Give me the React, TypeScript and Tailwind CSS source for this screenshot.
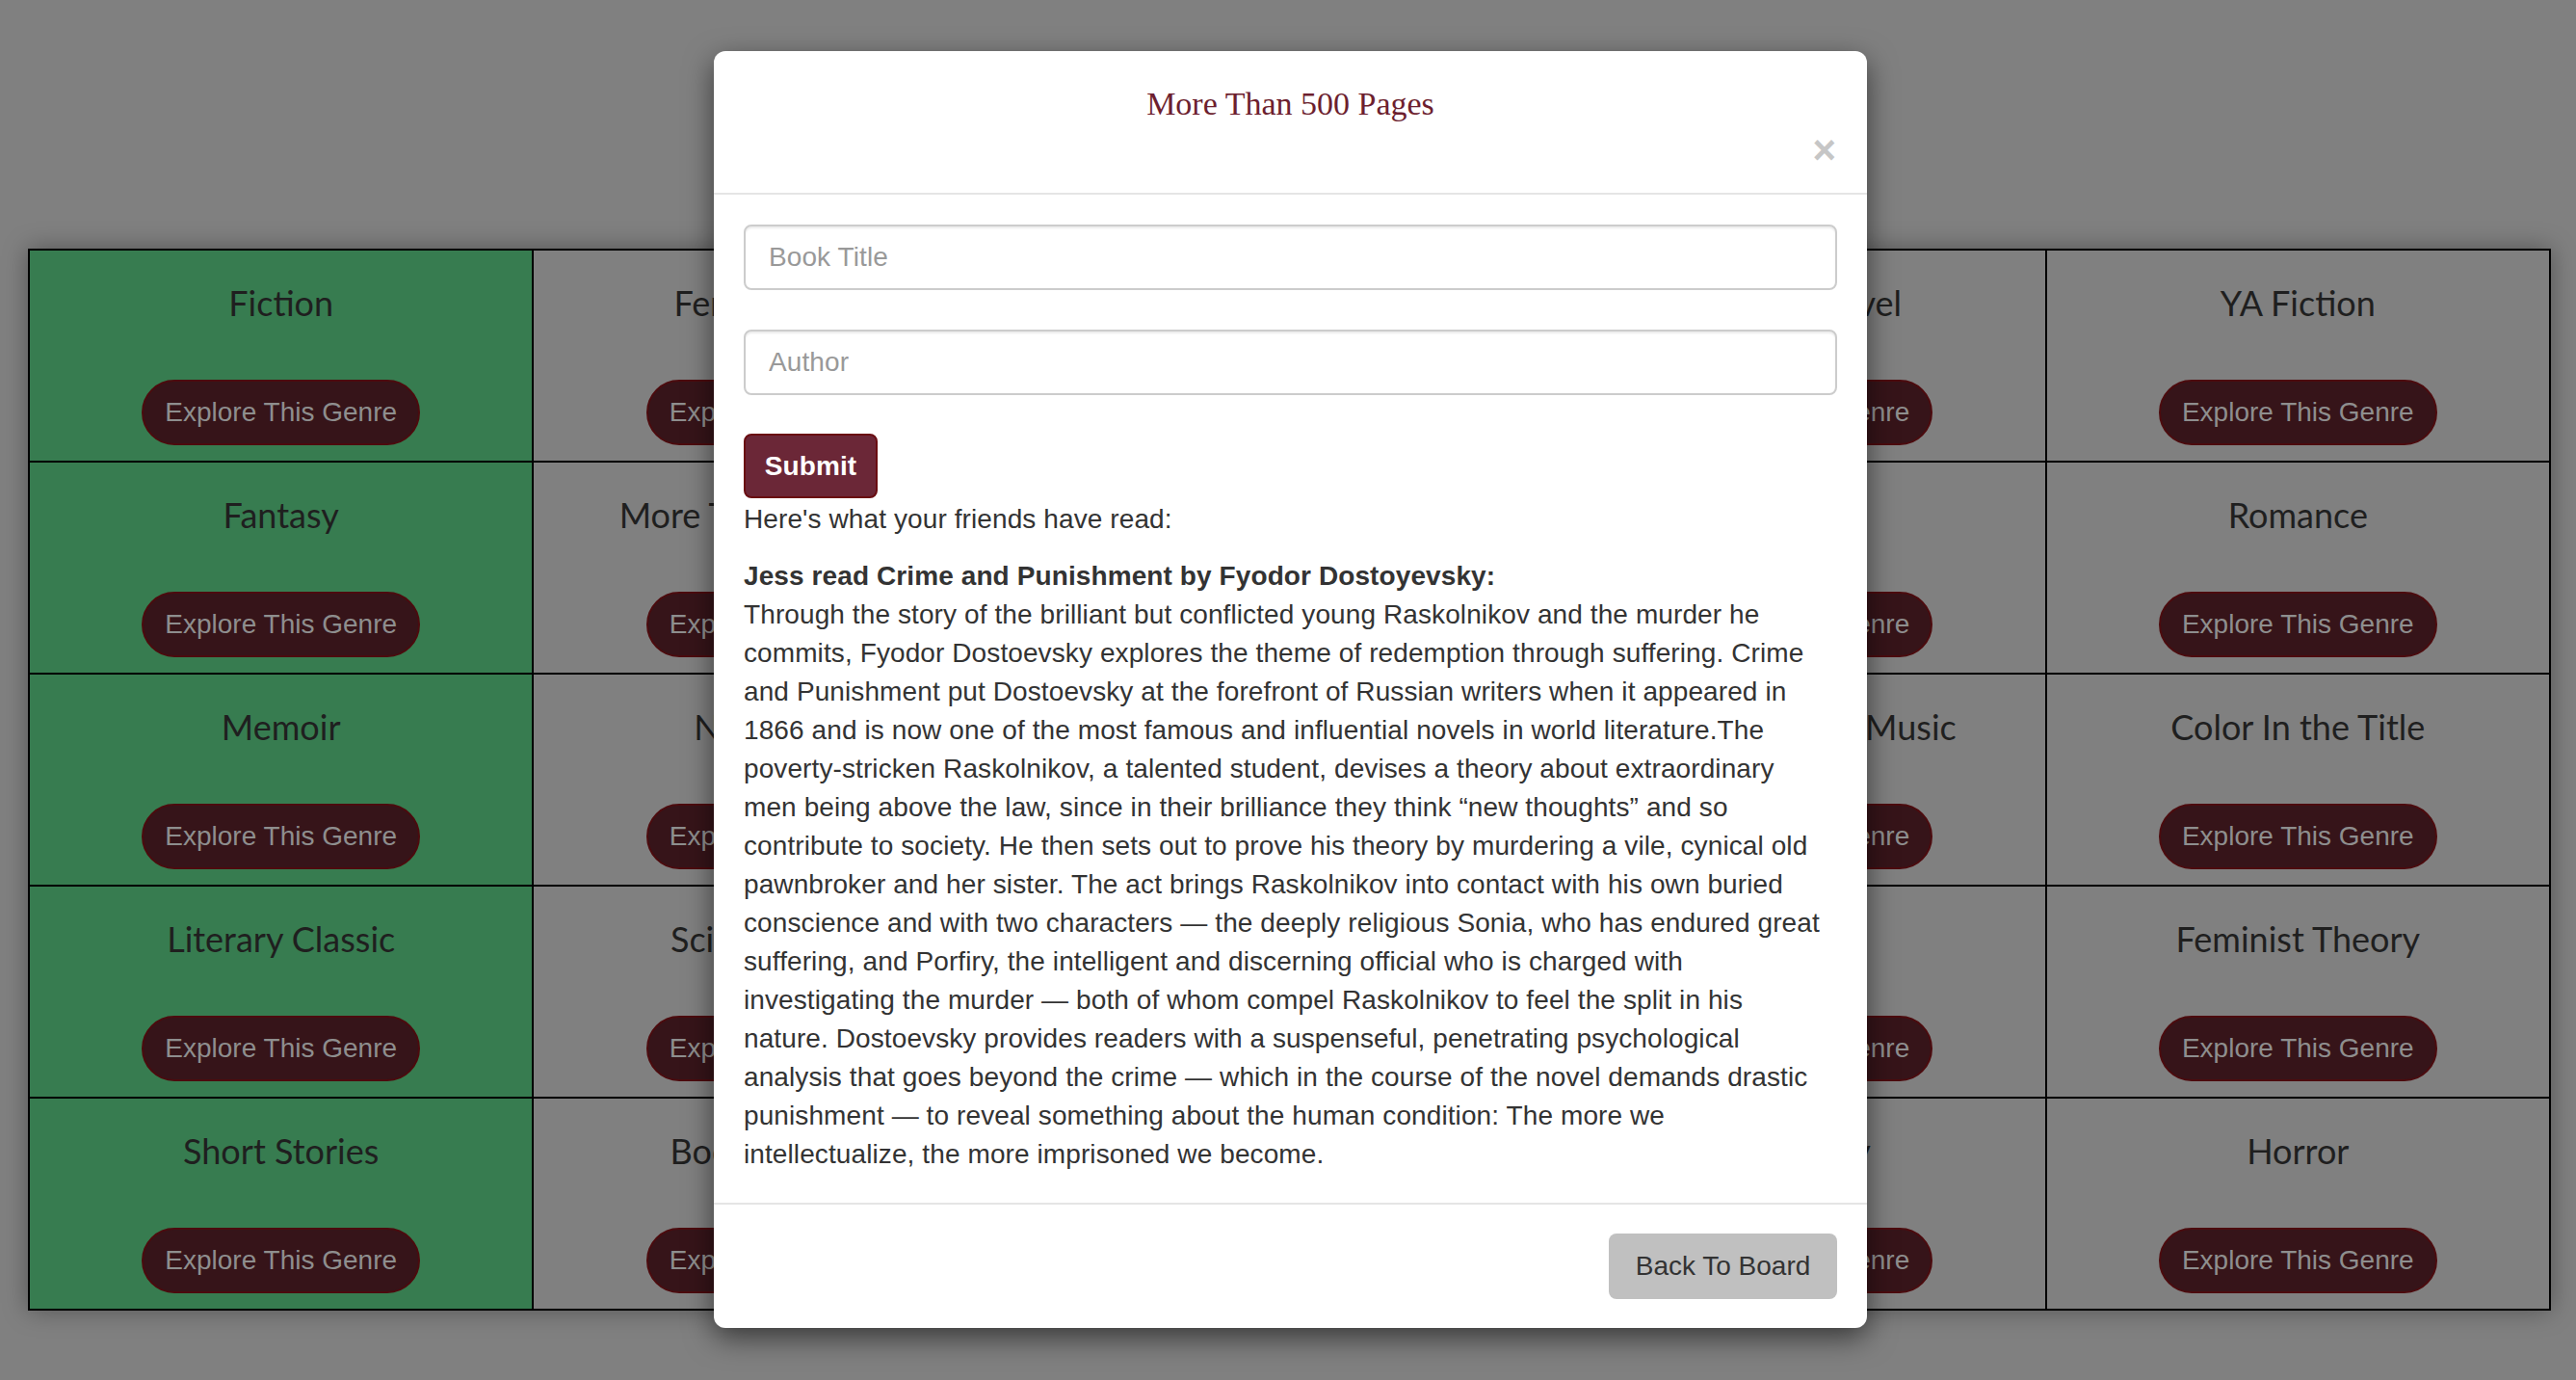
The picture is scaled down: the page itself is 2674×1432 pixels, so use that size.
import React from "react";

/* ── 棋盘数据 ─────────────────────────────────── */
const genres: string[][] = [
  ["Fiction", "Female Author", "Poetry", "Graphic Novel", "YA Fiction"],
  ["Fantasy", "More Than 500 Pages", "Mystery", "Travel", "Romance"],
  ["Memoir", "Non-Fiction", "Self Help", "Book Involving Music", "Color In the Title"],
  ["Literary Classic", "Science Fiction", "History", "Plays", "Feminist Theory"],
  ["Short Stories", "Book Club Pick", "Humor", "Biography", "Horror"],
];

const sans = "font-['Liberation_Sans',Arial,sans-serif]";

// 按截图中的换行拆开
const summaryLines = [
  "Through the story of the brilliant but conflicted young Raskolnikov and the murder he",
  "commits, Fyodor Dostoevsky explores the theme of redemption through suffering. Crime",
  "and Punishment put Dostoevsky at the forefront of Russian writers when it appeared in",
  "1866 and is now one of the most famous and influential novels in world literature.The",
  "poverty-stricken Raskolnikov, a talented student, devises a theory about extraordinary",
  "men being above the law, since in their brilliance they think \u201cnew thoughts\u201d and so",
  "contribute to society. He then sets out to prove his theory by murdering a vile, cynical old",
  "pawnbroker and her sister. The act brings Raskolnikov into contact with his own buried",
  "conscience and with two characters \u2014 the deeply religious Sonia, who has endured great",
  "suffering, and Porfiry, the intelligent and discerning official who is charged with",
  "investigating the murder \u2014 both of whom compel Raskolnikov to feel the split in his",
  "nature. Dostoevsky provides readers with a suspenseful, penetrating psychological",
  "analysis that goes beyond the crime \u2014 which in the course of the novel demands drastic",
  "punishment \u2014 to reveal something about the human condition: The more we",
  "intellectualize, the more imprisoned we become.",
];

/* ── 单元格 ───────────────────────────────────── */
function GenreCell({ name, done }: { name: string; done: boolean }) {
  return (
    <div
      className={`flex h-[218px] flex-col items-center pt-[34px] ${
        done ? "bg-[#377c50]" : "bg-[#808080]"
      }`}
    >
      <h3 className="whitespace-nowrap font-['Lato',sans-serif] text-[36px] leading-[40px] text-[#1f1f1f]">
        {name}
      </h3>
      <button
        type="button"
        className={`mt-[60px] h-[68px] w-[289px] rounded-full border-2 border-[#4c0b0e] bg-[#361419] text-[28px] text-[#8e8e8e] ${sans}`}
      >
        Explore This Genre
      </button>
    </div>
  );
}

/* ── 弹窗 ─────────────────────────────────────── */
function GenreModal() {
  return (
    <div
      className={`absolute left-[741px] top-[53px] w-[1197px] rounded-[12px] bg-white shadow-[0_10px_30px_rgba(0,0,0,0.55)] ${sans}`}
    >
      {/* header */}
      <div className="border-b-2 border-[#e5e5e5] px-[30px] pb-[27px] pt-[30px]">
        <h4 className="text-center font-['Liberation_Serif',serif] text-[34px] leading-[50px] text-[#6d1f2f]">
          More Than 500 Pages
        </h4>
        <div className="flex justify-end">
          <button
            type="button"
            className="h-[40px] pr-[2px] text-[42px] font-bold leading-[46px] text-[#c6c6c6]"
          >
            ×
          </button>
        </div>
      </div>

      {/* body */}
      <div className="px-[31px] pb-[30px] pt-[31px] text-[28px] leading-[40px] tracking-[0.1px] text-[#333333]">
        <input
          type="text"
          placeholder="Book Title"
          className="mb-[41px] block h-[68px] w-full rounded-[8px] border-2 border-[#cccccc] px-[24px] text-[28px] shadow-[inset_0_2px_2px_rgba(0,0,0,0.08)] outline-none placeholder:text-[#999999]"
        />
        <input
          type="text"
          placeholder="Author"
          className="mb-[40px] block h-[68px] w-full rounded-[8px] border-2 border-[#cccccc] px-[24px] text-[28px] shadow-[inset_0_2px_2px_rgba(0,0,0,0.08)] outline-none placeholder:text-[#999999]"
        />
        <button
          type="button"
          className="h-[67px] w-[139px] rounded-[8px] border-2 border-[#6a0d12] bg-[#6b2737] text-[28px] font-bold text-white"
        >
          Submit
        </button>
        <p className="mb-[19px] mt-[2px]">Here's what your friends have read:</p>
        <p className="font-bold">Jess read Crime and Punishment by Fyodor Dostoyevsky:</p>
        <p>
          {summaryLines.map((line, i) => (
            <span key={i} className="block whitespace-nowrap">
              {line}
            </span>
          ))}
        </p>
      </div>

      {/* footer */}
      <div className="flex justify-end border-t-2 border-[#e5e5e5] px-[31px] py-[30px]">
        <button
          type="button"
          className="h-[68px] w-[237px] rounded-[8px] bg-[#c0c0c0] text-[28px] text-[#333333]"
        >
          Back To Board
        </button>
      </div>
    </div>
  );
}

/* ── 根布局 ───────────────────────────────────── */
export default function App() {
  return (
    <div className="relative h-[1432px] w-[2674px] overflow-hidden bg-[#808080] pt-[258px]">
      {/* 棋盘 */}
      <div className="ml-[29px] grid w-[2619px] grid-cols-5 gap-[2px] bg-black p-[2px] shadow-[0_0_24px_rgba(0,0,0,0.35)]">
        {genres.flatMap((row, r) =>
          row.map((name, c) => <GenreCell key={`${r}-${c}`} name={name} done={c === 0} />),
        )}
      </div>

      <GenreModal />
    </div>
  );
}
